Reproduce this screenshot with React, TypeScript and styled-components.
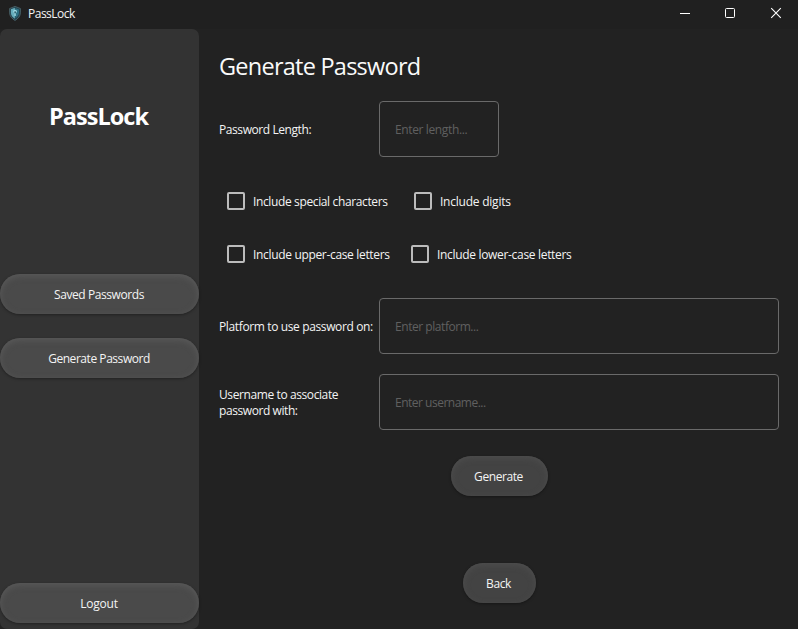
import React from "react";
import styled, { createGlobalStyle } from "styled-components";

const GlobalStyle = createGlobalStyle`
  *, *::before, *::after { box-sizing: border-box; }
  html, body { margin: 0; background: #222222; overflow: hidden; }
  body { font-family: "Open Sans", "Noto Sans", sans-serif; font-size: 12px; color: #f4f4f4; }
`;

const Window = styled.div`
  width: 798px;
  height: 629px;
  display: flex;
  flex-direction: column;
  background: #222222;
`;

const TitleBar = styled.header`
  height: 29px;
  display: flex;
  justify-content: space-between;
  background: #202020;
`;

const Brand = styled.div`
  display: flex;
  align-items: center;
  gap: 7px;
  padding: 0 0 2px 9px;
  svg { display: block; }
`;

const Controls = styled.div`
  display: flex;
  svg { display: block; }
`;

const Body = styled.div`
  flex: 1;
  display: flex;
`;

const Sidebar = styled.nav`
  width: 199px;
  display: flex;
  flex-direction: column;
  background: #333333;
  border-radius: 7px;
`;

const Label = styled.span<{ $track?: number }>`
  white-space: nowrap;
  line-height: 16px;
  letter-spacing: ${(p) => p.$track ?? -0.3}px;
`;

const Logo = styled.h1`
  margin: 71px 0 141px;
  padding-right: 2px;
  height: 33px;
  line-height: 33px;
  font-size: 23.5px;
  font-weight: 700;
  color: #ffffff;
  text-align: center;
  letter-spacing: -0.95px;
`;

const Button = styled.button<{ $width: number; $tone: string; $edge: string }>`
  width: ${(p) => p.$width}px;
  height: 40px;
  flex: none;
  padding: 0 1px 0 0;
  border: 0;
  border-radius: 20px;
  background: ${(p) => p.$tone};
  box-shadow: inset 0 2px 6px ${(p) => p.$edge}, 0 1px 3px rgba(0, 0, 0, 0.35);
  color: #f4f4f4;
  font: inherit;
`;

const NavGroup = styled.div`
  flex: 1;
  display: flex;
  flex-direction: column;
  gap: 24px;
  padding-bottom: 6px;
  & > :last-child { margin-top: auto; }
`;

const Main = styled.main`
  flex: 1;
  padding: 0 19px 0 20px;
  display: flex;
  flex-direction: column;
`;

const Heading = styled.h2`
  margin: 21px 0 18px;
  height: 33px;
  line-height: 33px;
  font-size: 23.5px;
  font-weight: 400;
  letter-spacing: -0.75px;
  color: #fafafa;
`;

const Field = styled.label`
  height: 56px;
  display: grid;
  grid-template-columns: 160px 1fr;
  align-items: center;
`;

const FieldText = styled.div`
  display: flex;
  flex-direction: column;
  padding-top: 2px;
`;

const Input = styled.input<{ $width: number; $track: number }>`
  width: ${(p) => p.$width}px;
  height: 56px;
  padding: 0 15px;
  border: 1px solid #6a6a6a;
  border-radius: 4px;
  background: transparent;
  color: #f4f4f4;
  font: inherit;
  letter-spacing: ${(p) => p.$track}px;
  outline: none;
  &::placeholder { color: #606060; opacity: 1; }
`;

const Options = styled.div`
  display: flex;
  flex-direction: column;
  gap: 35px;
  margin: 35px 0;
  padding-left: 8px;
`;

const OptionRow = styled.div<{ $first: number }>`
  height: 18px;
  display: grid;
  grid-template-columns: ${(p) => p.$first}px 1fr;
`;

const Option = styled.label`
  display: flex;
  align-items: center;
  gap: 8px;
  & > span { padding-top: 2px; }
`;

const CheckBox = styled.input`
  appearance: none;
  width: 18px;
  height: 18px;
  margin: 0;
  border: 2px solid #bcbcbc;
  border-radius: 2px;
`;

const Actions = styled.div`
  display: flex;
  flex-direction: column;
  align-items: center;
  gap: 67px;
  margin: 26px 0 0;
`;

const Stack = styled.div`
  display: flex;
  flex-direction: column;
  gap: 20px;
`;

const ShieldIcon = () => (
  <svg width="12" height="15" viewBox="0 0 12 15">
    <path d="M6 .4 11.4 2.5v4.3c0 3.4-2.3 5.8-5.4 7.7C2.9 12.6.6 10.2.6 6.8V2.5z" fill="#24414c" stroke="#56727b" strokeWidth=".7" />
    <path d="M5.9 1.8v11C3.5 11.3 1.9 9.3 1.9 6.8V3.3z" fill="#66aebd" />
    <path d="M6.4 2 10 3.4v3.4c0 2.3-1.4 4-3.6 5.6z" fill="#2d7184" />
    <path d="M4.2 5.2a1.9 1.9 0 0 1 3.7 0v1.3H4.2zM5.4 7h1.4v3H5.4z" fill="#9bd8e2" />
    <path d="M5.6 5.3h1v2h-1z" fill="#193e4b" />
  </svg>
);

const NavButton = ({ text, track }: { text: string; track: number }) => (
  <Button $width={199} $tone="#4a4a4a" $edge="#5a5a5a">
    <Label $track={track}>{text}</Label>
  </Button>
);

const CheckOption = ({ text, track }: { text: string; track: number }) => (
  <Option>
    <CheckBox type="checkbox" />
    <Label $track={track}>{text}</Label>
  </Option>
);

export default function App() {
  return (
    <>
      <GlobalStyle />
      <Window>
        <TitleBar>
          <Brand>
            <ShieldIcon />
            <Label $track={-0.5}>PassLock</Label>
          </Brand>
          <Controls>
            <svg width="138" height="29" viewBox="0 0 138 29" fill="none" stroke="#ffffff">
              <path d="M20 13.5h10" />
              <rect x="65.5" y="8.5" width="9" height="9" rx="1" />
              <path d="m111.2 8.2 9.6 9.6m0-9.6-9.6 9.6" strokeWidth="1.1" />
            </svg>
          </Controls>
        </TitleBar>
        <Body>
          <Sidebar>
            <Logo>PassLock</Logo>
            <NavGroup>
              <NavButton text="Saved Passwords" track={-0.42} />
              <NavButton text="Generate Password" track={-0.45} />
              <NavButton text="Logout" track={-0.2} />
            </NavGroup>
          </Sidebar>
          <Main>
            <Heading>Generate Password</Heading>
            <Field>
              <FieldText><Label $track={-0.42}>Password Length:</Label></FieldText>
              <Input $width={120} $track={-0.37} placeholder="Enter length..." />
            </Field>
            <Options>
              <OptionRow $first={187}>
                <CheckOption text="Include special characters" track={-0.37} />
                <CheckOption text="Include digits" track={-0.23} />
              </OptionRow>
              <OptionRow $first={184}>
                <CheckOption text="Include upper-case letters" track={-0.33} />
                <CheckOption text="Include lower-case letters" track={-0.32} />
              </OptionRow>
            </Options>
            <Stack>
              <Field>
                <FieldText><Label $track={-0.37}>Platform to use password on:</Label></FieldText>
                <Input $width={400} $track={-0.45} placeholder="Enter platform..." />
              </Field>
              <Field>
                <FieldText>
                  <Label $track={-0.4}>Username to associate</Label>
                  <Label $track={-0.42}>password with:</Label>
                </FieldText>
                <Input $width={400} $track={-0.5} placeholder="Enter username..." />
              </Field>
            </Stack>
            <Actions>
              <Button $width={97} $tone="#434343" $edge="#4e4e4e"><Label $track={-0.42}>Generate</Label></Button>
              <Button $width={73} $tone="#434343" $edge="#4e4e4e"><Label $track={-0.4}>Back</Label></Button>
            </Actions>
          </Main>
        </Body>
      </Window>
    </>
  );
}
